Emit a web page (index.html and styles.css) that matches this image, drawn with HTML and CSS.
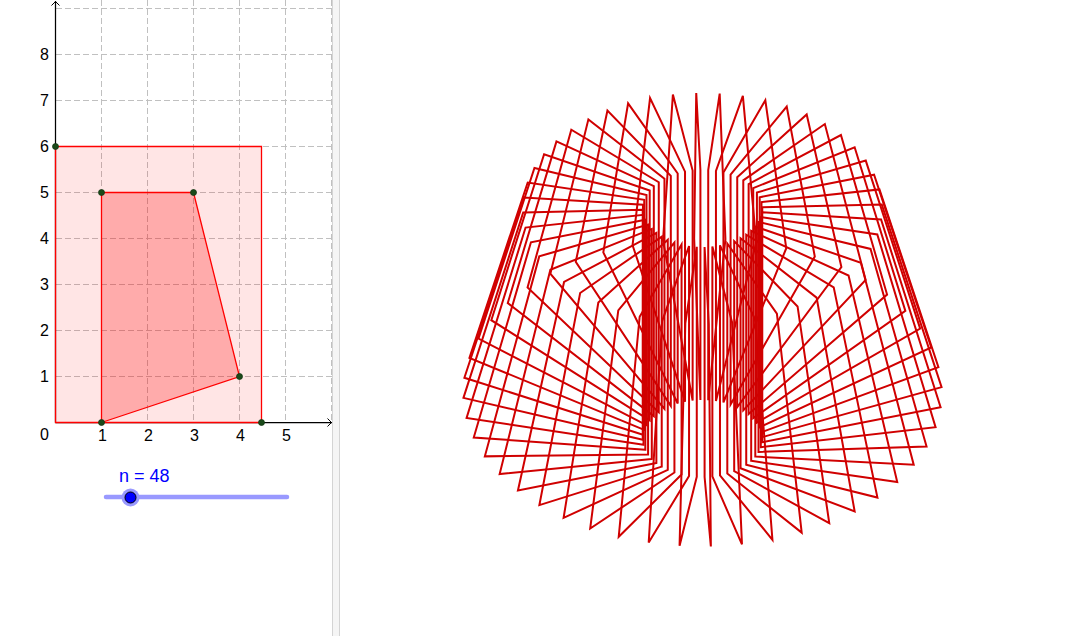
FILE: index.html
```html
<!DOCTYPE html>
<html lang="en">
<head>
<meta charset="utf-8">
<title>Rotated polygon</title>
<link rel="stylesheet" href="styles.css">
</head>
<body>
<div class="applet">
  <section class="graphics-left">
    <svg class="plot" width="332" height="636" viewBox="0 0 332 636" xmlns="http://www.w3.org/2000/svg">
      <g class="grid">
        <path d="M101.5 0V422M147.5 0V422M193.5 0V422M239.5 0V422M285.5 0V422M331.5 0V422"/>
        <path d="M56 8.5H332M56 54.5H332M56 100.5H332M56 146.5H332M56 192.5H332M56 238.5H332M56 284.5H332M56 330.5H332M56 376.5H332"/>
      </g>
      <g class="axes">
        <path d="M55.5 422.5V1M55.5 422.5H332"/>
        <path class="arrow" d="M51.5 5.5L55.5 1.5L59.5 5.5M327.5 418.5L331.5 422.5L327.5 426.5"/>
      </g>
      <polygon class="rect" points="55.5,422.5 261.5,422.5 261.5,146.5 55.5,146.5"/>
      <polygon class="quad" points="101.5,422.5 239.5,376.5 193.5,192.5 101.5,192.5"/>
      <g class="pts">
        <circle cx="55.5" cy="146.5" r="3"/>
        <circle cx="101.5" cy="192.5" r="3"/>
        <circle cx="193.5" cy="192.5" r="3"/>
        <circle cx="239.5" cy="376.5" r="3"/>
        <circle cx="101.5" cy="422.5" r="3"/>
        <circle cx="261.5" cy="422.5" r="3"/>
      </g>
      <g class="labels">
        <text x="40" y="60">8</text>
        <text x="40" y="106">7</text>
        <text x="40" y="152">6</text>
        <text x="40" y="198">5</text>
        <text x="40" y="244">4</text>
        <text x="40" y="290">3</text>
        <text x="40" y="336">2</text>
        <text x="40" y="382">1</text>
        <text x="40" y="440">0</text>
        <text x="98" y="441">1</text>
        <text x="144" y="441">2</text>
        <text x="190" y="441">3</text>
        <text x="236" y="441">4</text>
        <text x="282" y="441">5</text>
      </g>
      <text class="slider-label" x="119" y="482">n = 48</text>
      <line class="slider-track" x1="106" y1="497" x2="287" y2="497"/>
      <circle class="slider-halo" cx="130.5" cy="497.5" r="9"/>
      <circle class="slider-knob" cx="130.5" cy="497.5" r="5.5"/>
    </svg>
  </section>
  <div class="splitter"></div>
  <section class="graphics-right">
    <svg id="surface" class="surface" width="745" height="636" viewBox="340 0 745 636" xmlns="http://www.w3.org/2000/svg"></svg>
  </section>
</div>
<script src="script.js"></script>
</body>
</html>
```
FILE: styles.css
```css
html, body {
  margin: 0;
  padding: 0;
  background: #fff;
  overflow: hidden;
}
.applet {
  display: flex;
  width: 1085px;
  height: 636px;
}
.graphics-left {
  flex: 0 0 332px;
}
.splitter {
  flex: 0 0 8px;
  box-sizing: border-box;
  background: #f5f5f5;
  border-left: 1px solid #d4d4d4;
  border-right: 1px solid #d4d4d4;
}
.graphics-right {
  flex: 1 1 auto;
}
.plot, .surface {
  display: block;
}
.grid path {
  fill: none;
  stroke: #c0c0c0;
  stroke-width: 1;
  stroke-dasharray: 6 3;
}
.axes path {
  fill: none;
  stroke: #000;
  stroke-width: 1.25;
}
.axes .arrow {
  stroke-width: 1;
}
.rect {
  fill: rgba(255, 0, 0, 0.1);
  stroke: #ff0000;
  stroke-width: 1.3;
}
.quad {
  fill: rgba(255, 0, 0, 0.25);
  stroke: #ff0000;
  stroke-width: 1.3;
}
.pts circle {
  fill: #1a4a1a;
  stroke: #123512;
  stroke-width: 0.75;
}
.labels text {
  font-family: "Liberation Sans", Arial, sans-serif;
  font-size: 16px;
  fill: #000;
}
.slider-label {
  font-family: "Liberation Sans", Arial, sans-serif;
  font-size: 18px;
  fill: #0000ff;
}
.slider-track {
  stroke: #9999ff;
  stroke-width: 4.5;
  stroke-linecap: round;
}
.slider-halo {
  fill: #9999ff;
}
.slider-knob {
  fill: #0000ff;
  stroke: #000;
  stroke-width: 1;
}
.surface polygon {
  fill: none;
  stroke: #d00000;
  stroke-width: 2;
  stroke-linejoin: miter;
}
```
FILE: script.js
```js
// Draws the solid of revolution: n copies of the quadrilateral turned about the y axis.
var svg = document.getElementById('surface');
var n = 48, vertices = [[1, 0], [4, 1], [3, 5], [1, 5]];
var cx = 702.5, cy = 438.5, sx = 59.8, sy = 46, sz = 38.5, phase = 2 * Math.PI / 180;
for (var k = 0; k < n; k++) {
  var a = phase + k * 2 * Math.PI / n;
  var pts = vertices.map(function (v) {
    var x = cx + sx * v[0] * Math.sin(a);
    var y = cy - sy * v[1] + sz * v[0] * Math.cos(a);
    return x.toFixed(2) + ',' + y.toFixed(2);
  });
  var poly = document.createElementNS('http://www.w3.org/2000/svg', 'polygon');
  poly.setAttribute('points', pts.join(' '));
  svg.appendChild(poly);
}
```
